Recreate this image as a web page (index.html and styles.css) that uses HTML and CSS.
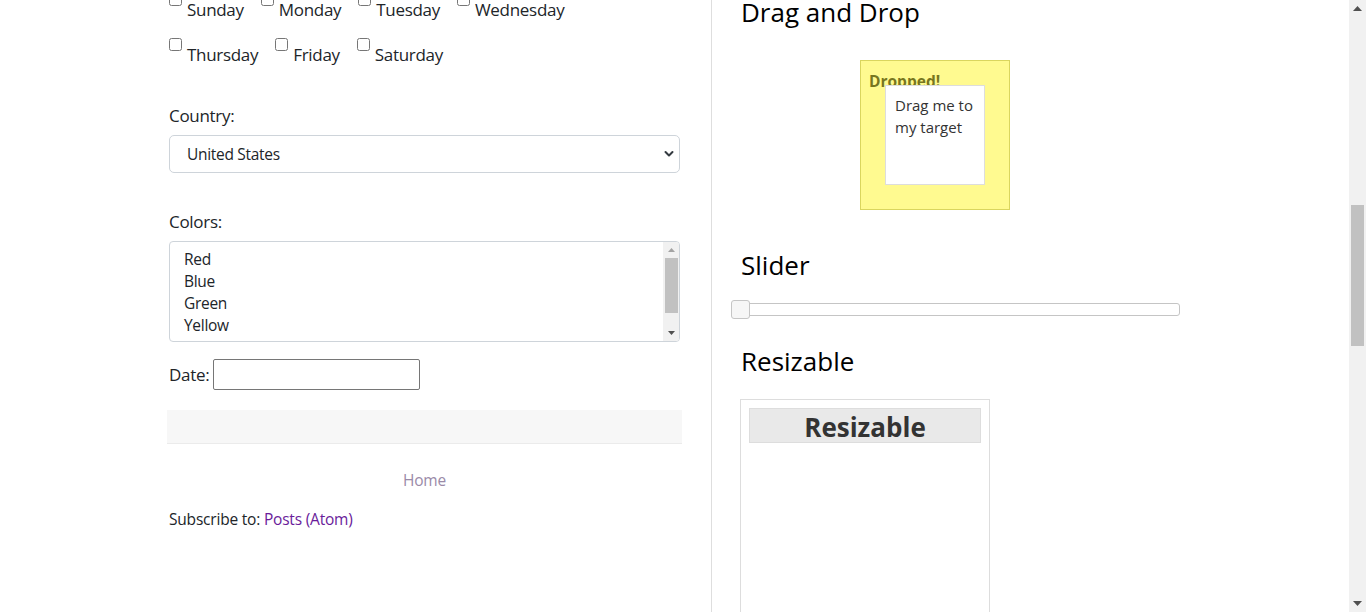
FILE: index.html
```html
<!DOCTYPE html>
<html lang="en">
<head>
<meta charset="utf-8">
<title>Widgets</title>
<link rel="stylesheet" href="styles.css">
</head>
<body>
<div class="viewport">
  <div class="page">
    <div class="cols">
      <div class="left">
        <div class="days">
          <div class="day-row">
            <label class="day"><input type="checkbox"><span>Sunday</span></label>
            <label class="day"><input type="checkbox"><span>Monday</span></label>
            <label class="day"><input type="checkbox"><span>Tuesday</span></label>
            <label class="day"><input type="checkbox"><span>Wednesday</span></label>
          </div>
          <div class="day-row">
            <label class="day"><input type="checkbox"><span>Thursday</span></label>
            <label class="day"><input type="checkbox"><span>Friday</span></label>
            <label class="day"><input type="checkbox"><span>Saturday</span></label>
          </div>
        </div>

        <div class="field-label country-label">Country:</div>
        <div class="select">
          <span>United States</span>
          <svg class="chev" width="10" height="8" viewBox="0 0 10 8"><path d="M1.5 2l3.5 3.5 3.5-3.5" fill="none" stroke="#343a40" stroke-width="2" stroke-linecap="round" stroke-linejoin="round"/></svg>
        </div>

        <div class="field-label colors-label">Colors:</div>
        <div class="listbox">
          <div class="options">
            <div class="opt">Red</div>
            <div class="opt">Blue</div>
            <div class="opt">Green</div>
            <div class="opt">Yellow</div>
            <div class="opt">Black</div>
          </div>
          <div class="lb-scroll">
            <div class="lb-btn"><svg width="7" height="4" viewBox="0 0 7 4"><polygon points="0,4 3.5,0 7,4" fill="#a3a3a3"/></svg></div>
            <div class="lb-thumb"></div>
            <div class="lb-btn lb-down"><svg width="7" height="4" viewBox="0 0 7 4"><polygon points="0,0 7,0 3.5,4" fill="#505050"/></svg></div>
          </div>
        </div>

        <div class="date-row">
          <span class="date-label">Date:</span>
          <input class="date-input" type="text">
        </div>

        <div class="band"></div>

        <div class="home"><a href="#">Home</a></div>

        <div class="subscribe">Subscribe to: <a href="#">Posts (Atom)</a></div>
      </div>

      <div class="right">
        <h2 class="wtitle dd-title">Drag and Drop</h2>
        <div class="droppable">
          <p class="dropped">Dropped!</p>
          <div class="draggable">Drag me to my target</div>
        </div>

        <h2 class="wtitle slider-title">Slider</h2>
        <div class="slider">
          <span class="handle"></span>
        </div>

        <h2 class="wtitle res-title">Resizable</h2>
        <div class="resizable">
          <h3 class="res-header">Resizable</h3>
        </div>
      </div>
    </div>
  </div>

  <div class="vscroll">
    <div class="vs-btn"><svg width="9" height="5" viewBox="0 0 9 5"><polygon points="0,5 4.5,0 9,5" fill="#505050"/></svg></div>
    <div class="vs-thumb"></div>
    <div class="vs-btn vs-down"><svg width="9" height="5" viewBox="0 0 9 5"><polygon points="0,0 9,0 4.5,5" fill="#505050"/></svg></div>
  </div>
</div>
</body>
</html>
```

FILE: styles.css
```css
html, body {
  margin: 0;
  padding: 0;
  height: 612px;
  overflow: hidden;
  background: #fff;
}

body {
  font-family: "Open Sans", "Noto Sans", sans-serif;
  color: #212529;
}

.viewport {
  display: flex;
  height: 612px;
}

.page {
  flex: 1;
  overflow: hidden;
}

.cols {
  display: flex;
  padding-left: 167px;
  height: 612px;
}

.left {
  width: 515px;
  padding: 0 2px;
  box-sizing: border-box;
  margin-right: 29px;
}

/* ---- checkboxes ---- */
.days {
  margin-top: -7px;
  display: flex;
  flex-direction: column;
  gap: 16px;
}

.day-row {
  display: flex;
  gap: 17px;
}

.day {
  display: flex;
  align-items: flex-start;
  font-size: 17px;
  line-height: 24px;
  letter-spacing: -0.3px;
}

.day input {
  margin: 0;
  width: 13px;
  height: 13px;
}

.day span {
  margin-left: 5px;
  padding-top: 5px;
}

/* ---- labels & selects ---- */
.field-label {
  font-size: 17px;
  line-height: 27px;
  letter-spacing: -0.3px;
}

.country-label {
  margin-top: 35px;
}

.select {
  margin-top: 6px;
  height: 38px;
  box-sizing: border-box;
  border: 1px solid #ced4da;
  border-radius: 5px;
  display: flex;
  align-items: center;
  justify-content: space-between;
  padding: 0 5px 0 17px;
  font-size: 15.5px;
  letter-spacing: -0.3px;
}

.colors-label {
  margin-top: 35px;
}

.listbox {
  margin-top: 6px;
  height: 101px;
  box-sizing: border-box;
  border: 1px solid #ced4da;
  border-radius: 4px;
  display: flex;
  overflow: hidden;
}

.options {
  flex: 1;
  padding: 6px 14px;
  font-size: 15.5px;
  line-height: 22px;
  letter-spacing: -0.3px;
  overflow: hidden;
}

.lb-scroll {
  width: 16px;
  background: #f1f1f1;
  display: flex;
  flex-direction: column;
  align-items: center;
}

.lb-btn {
  height: 16px;
  width: 16px;
  display: flex;
  align-items: center;
  justify-content: center;
  flex: none;
}

.lb-thumb {
  width: 13px;
  height: 55px;
  background: #c1c1c1;
}

.lb-down {
  margin-top: auto;
}

/* ---- date ---- */
.date-row {
  margin-top: 17px;
  display: flex;
  align-items: center;
  gap: 4px;
}

.date-label {
  font-size: 17px;
  letter-spacing: -0.3px;
}

.date-input {
  width: 207px;
  height: 31px;
  box-sizing: border-box;
  border: 1px solid #767676;
  border-radius: 2px;
  margin: 0;
  padding: 0 4px;
}

/* ---- footer band ---- */
.band {
  margin: 20px -2px 0;
  height: 34px;
  box-sizing: border-box;
  background: #f7f7f7;
  border-bottom: 1px solid #ebebeb;
}

.home {
  margin-top: 24px;
  text-align: center;
  font-size: 15.5px;
  line-height: 24px;
  letter-spacing: -0.15px;
}

.home a {
  color: #9a8aa8;
  text-decoration: none;
}

.subscribe {
  margin-top: 15px;
  font-size: 15.5px;
  line-height: 24px;
  letter-spacing: -0.2px;
}

.subscribe a {
  color: #6a1b9a;
  text-decoration: none;
}

/* ---- right column ---- */
.right {
  border-left: 1px solid #dedede;
  padding-left: 28px;
  width: 480px;
}

.wtitle {
  margin: 0;
  font-size: 26px;
  font-weight: 400;
  line-height: 30px;
  color: #000;
}

.dd-title {
  margin-top: -3px;
  padding-left: 1px;
}

.slider-title,
.res-title {
  padding-left: 1px;
}

.droppable {
  position: relative;
  margin: 33px 0 0 120px;
  width: 150px;
  height: 150px;
  box-sizing: border-box;
  background: #fffa90;
  border: 1px solid #dad55e;
  padding: 10px 8px 8px;
}

.dropped {
  margin: 0;
  font-weight: 700;
  font-size: 15.5px;
  line-height: 20px;
  color: #777620;
}

.draggable {
  position: absolute;
  left: 24px;
  top: 24px;
  width: 100px;
  height: 100px;
  box-sizing: border-box;
  background: #fff;
  border: 1px solid #dddddd;
  padding: 8px 9px;
  font-size: 15px;
  line-height: 22px;
  color: #333;
}

.slider-title {
  margin-top: 40px;
}

.slider {
  position: relative;
  margin-top: 23px;
  width: 440px;
  height: 13px;
  box-sizing: border-box;
  border: 1px solid #c5c5c5;
  border-radius: 3px;
  background: #fff;
}

.handle {
  position: absolute;
  left: -10px;
  top: -4px;
  width: 19px;
  height: 19px;
  box-sizing: border-box;
  background: #f6f6f6;
  border: 1px solid #c5c5c5;
  border-radius: 3px;
}

.res-title {
  margin-top: 30px;
}

.resizable {
  margin-top: 23px;
  width: 250px;
  height: 260px;
  box-sizing: border-box;
  border: 1px solid #dddddd;
  padding: 8px;
}

.res-header {
  margin: 0;
  height: 35px;
  box-sizing: border-box;
  background: #e9e9e9;
  border: 1px solid #dddddd;
  text-align: center;
  font-size: 26px;
  line-height: 37px;
  font-weight: 700;
  color: #333;
}

/* ---- page scrollbar ---- */
.vscroll {
  width: 17px;
  background: #f1f1f1;
  display: flex;
  flex-direction: column;
  align-items: center;
  flex: none;
}

.vs-btn {
  width: 17px;
  height: 17px;
  display: flex;
  align-items: center;
  justify-content: center;
  flex: none;
}

.vs-thumb {
  margin-top: 188px;
  width: 13px;
  height: 141px;
  background: #c1c1c1;
}

.vs-down {
  margin-top: auto;
}
```
